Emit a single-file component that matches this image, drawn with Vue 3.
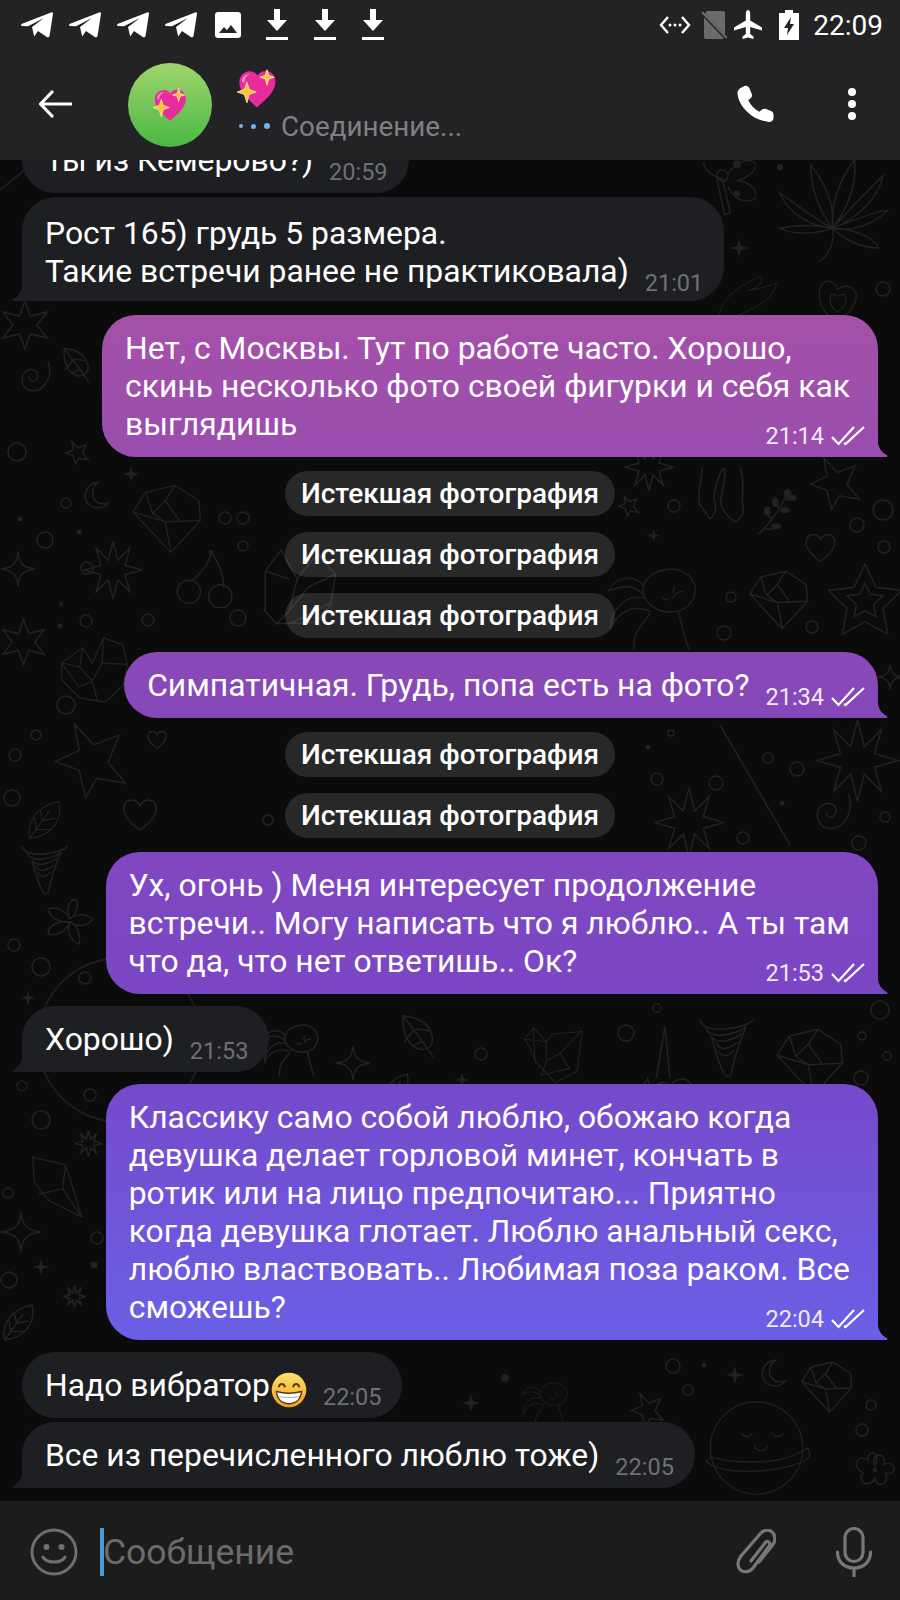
<template>
  <div class="screen">
    <svg class="defs" width="0" height="0">
      <defs>
        <symbol id="heart-emoji" viewBox="0 0 100 100">
          <path d="M50 94C28 74 8 58 8 34 8 18 20 8 33 8c8 0 14 4 18 10 4-7 11-11 19-11 14 0 24 11 24 26 0 24-22 41-44 61z" fill="#e92c9c" />
          <path d="M14 32C15 20 24 14 33 15c-8 3-13 10-13 20z" fill="#fa8dcc" />
          <path d="M26 34l5 17 17 6-17 6-5 20-6-20-17-6 17-6z" fill="#fbc531" stroke="#fff0a8" stroke-width="2" />
          <path d="M74 4l4 14 13 4-13 4-4 15-4-15-13-4 13-4z" fill="#fbc531" stroke="#fff0a8" stroke-width="2" />
        </symbol>
        <symbol id="star5" viewBox="0 0 100 100"><path d="M28 5l24 26 32-12-14 34 22 26-36-6-14 24-8-34L4 52l30-14z" /></symbol>
        <symbol id="star5b" viewBox="0 0 100 100"><path d="M50 5l14 30 33 4-24 23 6 33-29-16-29 16 6-33L3 39l33-4z" /><path d="M50 30l7 14 16 2-12 11 3 16-14-8-14 8 3-16-12-11 16-2z" /></symbol>
        <symbol id="star4" viewBox="0 0 100 100"><path d="M50 2c3 32 12 44 48 48-36 4-45 16-48 48-3-32-12-44-48-48 36-4 45-16 48-48z" /></symbol>
        <symbol id="star6" viewBox="0 0 100 100"><path d="M50 2l11 30 33-8-20 26 20 26-33-8-11 30-11-30-33 8 20-26L6 24l33 8z" /></symbol>
        <symbol id="burst" viewBox="0 0 100 100"><path d="M50 2l8 32 20-20-8 28 28 8-28 8 8 28-20-20-8 32-8-32-20 20 8-28-28-8 28-8-8-28 20 20z" /></symbol>
        <symbol id="spark" viewBox="0 0 100 100"><path d="M50 5l10 35 35 10-35 10-10 35-10-35L5 50l35-10z" fill="#222" stroke="none" /></symbol>
        <symbol id="diamond" viewBox="0 0 100 100"><path d="M3 40l18-28 42-10 34 22 2 28-42 46zM3 40l46 14 50-2M21 12l10 30 18 12 8 44M63 2l-14 22 20 28M31 42l18-18" /></symbol>
        <symbol id="heart" viewBox="0 0 100 100"><path d="M50 92C25 72 5 55 5 32 5 16 16 8 28 8c10 0 18 6 22 16 5-10 13-16 23-16 13 0 22 10 22 24 0 23-20 40-45 60z" /></symbol>
        <symbol id="heart2" viewBox="0 0 100 100"><path d="M48 96C20 86 4 60 8 28 10 12 22 4 34 8c8 3 12 8 14 20 8-8 20-12 32-6 12 7 14 20 8 34-8 20-22 32-40 40z" /><path d="M48 78c-10-8-18-18-16-34 2-8 10-10 16-2 6-6 18-8 20 2 2 14-8 26-20 34z" /></symbol>
        <symbol id="moon" viewBox="0 0 100 100"><path d="M58 4C28 6 8 26 8 54c0 24 20 42 44 42 16 0 30-6 38-18-30 10-56-4-56-34 0-18 8-32 24-40z" /></symbol>
        <symbol id="leaf" viewBox="0 0 100 100"><path d="M12 96C4 60 24 16 84 4c10 40-10 84-72 92zM12 96l50-70M28 74l-4-30M28 74l38 0M44 52l-6-28M44 52l32-6" /></symbol>
        <symbol id="leaf2" viewBox="0 0 100 100"><path d="M12 4c36 4 62 20 66 50 2 16-12 30-30 26C24 74 8 40 12 4zM12 4l46 62 22 32M34 38l-20 26M56 62L30 74M40 34l34 4" /></symbol>
        <symbol id="cherry" viewBox="0 0 100 100"><path d="M62 4C60 24 44 40 28 54M62 4c16 20 22 44 22 62" /><circle cx="24" cy="72" r="20" /><circle cx="78" cy="80" r="20" /><circle cx="62" cy="4" r="3" fill="#222" /></symbol>
        <symbol id="crystal" viewBox="0 0 100 100"><path d="M4 30l20-26 20 36-10 40-16 16-14-16zM4 30l30 10M44 40L70 8l22 26-6 36-52 26M70 8l-26 32M92 34L58 50 34 80M2 78l16 18 50-2 20-24" /></symbol>
        <symbol id="crystal2" viewBox="0 0 100 100"><path d="M5 4l60 14 30 96-60-30L8 50zM65 18L60 62 15 72M60 62l35 52" transform="scale(.88)" /></symbol>
        <symbol id="gem" viewBox="0 0 100 100"><path d="M5 40l30-22 14 22 16-36 28 10 6 28-6 30-26 24-36-6-26-26zM35 18l-4 28 18 20 14-26 2-36M31 46L5 40M49 66l8 30M63 40l36 2M49 66L30 74 5 40" /></symbol>
        <symbol id="gem2" viewBox="0 0 100 100"><path d="M4 30l14-18 20 22 10-12 46-4-8 62-34 18-30-32-10-24zM18 12l2 48M4 30l34 4 0 30 22-12 34-36M60 52l14 24-44 10M38 64l-8 22" /></symbol>
        <symbol id="flower" viewBox="0 0 100 100"><path d="M50 40c-16-30 30-40 22-4 30-14 36 30 4 22 14 30-26 40-26 10-10 30-50 14-30-12-30-10-16-50 12-30-2-26 34-28 18 14z" /><circle cx="50" cy="50" r="4" fill="#222" /></symbol>
        <symbol id="flower2" viewBox="0 0 100 100"><path d="M50 44C40 20 50 6 62 4c6 16 0 32-12 40 10-10 30-12 46 0-12 14-30 18-46 6 14 6 22 24 18 44-16-6-26-24-18-44-6 16-24 30-44 24 0-16 20-28 44-24C30 52 12 44 6 24c18-6 36 4 44 20z" /></symbol>
        <symbol id="spiral" viewBox="0 0 100 100"><path d="M88 6c16 40-8 88-46 90C14 96 2 72 8 50c6-18 28-26 40-16 12 10 8 30-6 32-8 1-14-6-12-14" /></symbol>
        <symbol id="weed" viewBox="0 0 100 100"><path d="M50 62C36 44 30 22 30 4c14 18 22 38 20 58zM50 62c-2-20 6-44 20-62 2 22-6 44-20 62zM50 62C66 44 80 30 96 14 92 34 72 54 50 62zM50 62C70 54 92 46 100 46 88 58 68 66 50 62zM50 62c14 0 36 6 42 18-16 0-32-8-42-18zM50 62C34 54 14 38 2 30c8 18 26 30 48 32zM50 62C30 58 12 60 2 62c12 6 32 6 48 0zM50 62c2 12-2 24-12 30" /></symbol>
        <symbol id="branch" viewBox="0 0 100 100"><path d="M8 100C40 70 60 40 72 8M40 66C24 60 28 40 28 40M24 88c12 4 28-2 30-10M58 40C46 40 42 24 42 24M66 22c8 0 18 0 24-6" /><ellipse cx="74" cy="8" rx="7" ry="9" fill="#222" /><ellipse cx="28" cy="48" rx="6" ry="9" fill="#222" /><ellipse cx="46" cy="28" rx="6" ry="9" fill="#222" /><ellipse cx="84" cy="18" rx="9" ry="5" fill="#222" /><ellipse cx="68" cy="46" rx="9" ry="5" fill="#222" /><ellipse cx="48" cy="82" rx="10" ry="5" fill="#222" /></symbol>
        <symbol id="shell" viewBox="0 0 100 100"><path d="M4 2c4 14 20 18 44 16 20-2 40-8 48-16M14 16c4 10 16 14 32 12 14-2 28-6 36-14M24 30c4 8 12 10 24 8 10-2 20-6 26-12M32 42c4 8 10 10 18 8 8-2 14-6 18-10M36 54c2 8 8 10 14 8 6-2 10-6 12-8M24 30c6 24 14 50 22 64 4 6 10 4 12-2 2-20 10-44 24-78" /></symbol>
        <symbol id="planet" viewBox="0 0 100 100"><circle cx="46" cy="50" r="42" /><path d="M4 58c30 8 70 6 88-8 4 4 4 10-8 14-30 10-70 10-84-2zM32 36c2 5 8 5 10 0M60 36c2 5 8 5 10 0M44 48c2 6 10 6 12 0" /></symbol>
        <symbol id="rabbit" viewBox="0 0 100 100"><path d="M40 30c8-20 40-24 52-8 10 14 2 32-16 36-22 4-40-12-36-28zM40 30C28 16 8 22 2 36c20-8 30-6 40 6M42 44C24 38 4 54 4 78c8-20 24-28 44-20M48 60C36 74 28 84 30 100M78 58c4 14 6 28 12 42M72 38l2-8M84 36c-4 0-10 2-12 8M60 42c2 4 4 4 8 2" /></symbol>
        <symbol id="socks" viewBox="0 0 100 100"><path d="M10 0C8 30 0 44 4 66l20 28c8-4 14-20 8-34-2-20 8-44 16-60M52 0c0 12-4 38-8 60-2 12 12 30 26 40 10-4 20-18 14-34C82 50 90 30 80 0" /></symbol>
        <symbol id="wing" viewBox="0 0 100 100"><path d="M0 100c10-50 50-60 72-74 6 10-4 22-20 24 14 0 36-8 46-12-2 24-34 46-88 62" /></symbol>
        <symbol id="butterfly" viewBox="0 0 100 100"><path d="M40 30C20 26 6 10 6 0M50 20C66 0 90-10 100 4c0 14-18 24-34 30 18 0 36 12 34 30-16 12-40 4-50-20M40 30l14 60-10 4-14-64z" /><circle cx="40" cy="24" r="10" /><circle cx="66" cy="4" r="6" fill="#222" /><circle cx="66" cy="56" r="4" fill="#222" /></symbol>
        <symbol id="unicorn" viewBox="0 0 100 100"><path d="M58 2l-10 60M58 2l6 60M14 96c-10-20 16-14 24-34 2 8 4 14 10 8 6-6 14-2 16 0 8-8 18-10 24-2 4 14-10 22-24 20-2 8 0 14-2 20M40 90l2 8" /></symbol>
      </defs>
    </svg>

    <header class="topbar">
      <div class="statusbar">
        <div class="status-left">
          <svg v-for="n in 4" :key="n" class="tg" viewBox="0 0 34 28"><path d="M1.500 13 31 1.500c1.200-.5 2.200.4 2 1.600L29.500 25c-.2 1.300-1.600 1.800-2.600 1L18 20l-3.800 5.500L12 16 24 7 8 15.200 2 15c-1-.1-1.300-1.500-.5-2z" fill="#fff" /></svg>
          <svg class="pic" viewBox="0 0 26 26"><path d="M3 0h20a3 3 0 0 1 3 3v20a3 3 0 0 1-3 3H3a3 3 0 0 1-3-3V3a3 3 0 0 1 3-3zm1 21h18l-6-8-4 5-3-3z" fill="#fff" fill-rule="evenodd" /></svg>
          <svg v-for="n in 3" :key="'d' + n" class="dl" viewBox="0 0 24 32"><path d="M9 0h6v11h7L12 22 2 11h7zM1 28h22v3H1z" fill="#fff" /></svg>
        </div>
        <div class="status-right">
          <svg class="vpn" viewBox="0 0 32 20"><path d="M9 2 2 10l7 8M23 2l7 8-7 8" fill="none" stroke="#fff" stroke-width="2.400" /><circle cx="11" cy="10" r="1.500" fill="#fff" /><circle cx="16" cy="10" r="1.500" fill="#fff" /><circle cx="21" cy="10" r="1.500" fill="#fff" /></svg>
          <svg class="sim" viewBox="0 0 25 28"><path d="M5 0h16a2 2 0 0 1 2 2v24a2 2 0 0 1-2 2H4a2 2 0 0 1-2-2V4z" fill="#6b6b6d" /><path d="M0 2l24 25" stroke="#232326" stroke-width="3.500" /><path d="M0 1l25 26" stroke="#6b6b6d" stroke-width="2" /></svg>
          <svg class="plane" viewBox="0 0 28 30"><path d="M14 0c1.400 0 2.200 2 2.200 4v6.500L28 17.500v3l-11.800-3.500v7l3.300 2.500V29L14 27.500 8.500 29v-2.500l3.300-2.500v-7L0 20.500v-3l11.800-7V4c0-2 .8-4 2.200-4z" fill="#fff" /></svg>
          <svg class="batt" viewBox="0 0 20 30"><path d="M6 0h8v3h6v27H0V3h6z" fill="#fff" /><path d="M12 7 5 18h4l-1 7 7-11h-4z" fill="#232326" /></svg>
          <span class="clock">22:09</span>
        </div>
      </div>
      <div class="actionbar">
        <svg class="back" viewBox="0 0 34 28"><path d="M14 2 2.500 14 14 26M3 14h30" fill="none" stroke="#fff" stroke-width="3.200" stroke-linecap="round" stroke-linejoin="round" /></svg>
        <div class="avatar"><svg class="avatar-emoji" viewBox="0 0 100 100"><use href="#heart-emoji" /></svg></div>
        <div class="peer">
          <svg class="peer-name" viewBox="0 0 100 100"><use href="#heart-emoji" /></svg>
          <div class="peer-status">
            <span class="typing"><i class="d1"></i><i class="d2"></i><i class="d3"></i></span>
            <span>Соединение...</span>
          </div>
        </div>
        <svg class="call" viewBox="0 0 38 38"><path d="M8.500 1c2-.8 4 .2 4.800 2l2.500 6c.6 1.500.2 3-1 4l-2.500 2.200c2 4.500 6 9 11 11.500l2.800-2.200c1.200-.9 2.600-1.100 4-.5l5 2c1.600.7 2.400 2.200 2.400 4v3c0 2.500-2 4-4.500 3.900C16 35.500 2.500 21 1.500 8.500 1.300 6.500 2.500 4 4.500 3z" fill="#fff" /></svg>
        <div class="more"><i></i><i></i><i></i></div>
      </div>
    </header>

    <main class="chat">
      <svg class="wallpaper" viewBox="0 0 900 1340" fill="none" stroke="#222">
        <use v-for="(d, i) in doodles" :key="i" :href="'#' + d[0]" :x="d[1]" :y="d[2] - 160" :width="d[3]" :height="d[4] || d[3]" :stroke-width="(1.5 * 100) / d[3]" />
        <circle v-for="(c, i) in rings" :key="'c' + i" :cx="c[0]" :cy="c[1] - 160" :r="c[2]" stroke-width="1.500" />
        <circle v-for="(c, i) in dots" :key="'p' + i" :cx="c[0]" :cy="c[1] - 160" :r="c[2]" fill="#222" stroke="none" />
        <path d="M720 565 790 685 M0 30 62 -20" stroke-width="1.500" />
        <circle cx="120" cy="880" r="82" stroke-width="1.500" />
      </svg>

      <template v-for="(m, i) in messages" :key="i">
        <div v-if="m.kind === 'expired'" class="row center" :class="m.cls"><span class="pill">Истекшая фотография</span></div>
        <div v-else class="row" :class="[m.kind, m.cls]">
          <div class="bubble" :class="[m.kind, m.inner, { tail: m.tail, wide: m.wide }]">
            <div class="text">
              <template v-for="(line, j) in m.lines" :key="j">{{ line }}<br v-if="j < m.lines.length - 1" /></template>
              <svg v-if="m.grin" class="grin" viewBox="0 0 100 100">
                <defs><linearGradient id="grin-fill" x1="0" y1="0" x2="0" y2="1"><stop offset="0" stop-color="#fde26a" /><stop offset="1" stop-color="#f59d1e" /></linearGradient></defs>
                <circle cx="50" cy="50" r="48" fill="url(#grin-fill)" />
                <path d="M22 40c3-9 13-9 16 0M62 40c3-9 13-9 16 0" fill="none" stroke="#5b3a12" stroke-width="6" stroke-linecap="round" />
                <path d="M15 54c22 6 48 6 70 0-2 22-16 34-35 34S17 76 15 54z" fill="#fff" stroke="#5b3a12" stroke-width="4" />
                <path d="M20 68c18 4 42 4 60 0" fill="none" stroke="#8c8c8c" stroke-width="2" />
              </svg>
            </div>
            <div class="meta">
              <span class="time">{{ m.time }}</span>
              <svg v-if="m.kind === 'out'" class="checks" viewBox="0 0 34 20"><path d="M1 11l6.500 7L23 1M13 17l1.500 1L33 1" fill="none" stroke="#fff" stroke-width="2.200" /></svg>
            </div>
          </div>
        </div>
      </template>
    </main>

    <footer class="composer">
      <svg class="smile" viewBox="0 0 48 48"><circle cx="24" cy="24" r="22" fill="none" stroke="#6f6f6f" stroke-width="3" /><circle cx="16.500" cy="19" r="3" fill="#6f6f6f" /><circle cx="31.500" cy="19" r="3" fill="#6f6f6f" /><path d="M13 29c3 6.500 19 6.500 22 0" fill="none" stroke="#6f6f6f" stroke-width="3" stroke-linecap="round" /></svg>
      <div class="input"><i class="caret"></i><span>Сообщение</span></div>
      <svg class="clip" viewBox="0 0 40 46"><path d="M15 33 29 15c2-3 6-1 4.500 2.500L17 40c-4 5-11 5-14 0-2-4-1-8 2-12L24 6c4-5 10-5 13-1 3 4 2 9-1 13L23 34" transform="translate(0 -1)" fill="none" stroke="#777" stroke-width="3.200" stroke-linecap="round" /></svg>
      <svg class="mic" viewBox="0 0 36 50"><rect x="9" y="1.500" width="18" height="33" rx="9" fill="none" stroke="#777" stroke-width="3.200" /><path d="M1.500 25c0 10 7 16 16.500 16s16.500-6 16.500-16M18 41v8" fill="none" stroke="#777" stroke-width="3.200" stroke-linecap="round" /></svg>
    </footer>
  </div>
</template>

<script setup>
const messages = [
  { kind: 'in', lines: ['Ты из Кемерово?)'], time: '20:59', cls: 'gap-s' },
  { kind: 'in', inner: 'low', lines: ['Рост 165) грудь 5 размера.', 'Такие встречи ранее не практиковала)'], time: '21:01', tail: true, cls: 'gap-s' },
  { kind: 'out', lines: ['Нет, с Москвы. Тут по работе часто. Хорошо,', 'скинь несколько фото своей фигурки и себя как', 'выглядишь'], time: '21:14', tail: true, wide: true, cls: 'gap-m' },
  { kind: 'expired', cls: 'gap-m' },
  { kind: 'expired', cls: 'gap-p' },
  { kind: 'expired', cls: 'gap-p' },
  { kind: 'out', lines: ['Симпатичная. Грудь, попа есть на фото?'], time: '21:34', tail: true, cls: 'gap-m' },
  { kind: 'expired', cls: 'gap-m' },
  { kind: 'expired', cls: 'gap-p' },
  { kind: 'out', lines: ['Ух, огонь ) Меня интересует продолжение', 'встречи.. Могу написать что я люблю.. А ты там', 'что да, что нет ответишь.. Ок?'], time: '21:53', tail: true, wide: true, cls: 'gap-m' },
  { kind: 'in', lines: ['Хорошо)'], time: '21:53', tail: true, cls: 'gap-l' },
  { kind: 'out', lines: ['Классику само собой люблю, обожаю когда', 'девушка делает горловой минет, кончать в', 'ротик или на лицо предпочитаю... Приятно', 'когда девушка глотает. Люблю анальный секс,', 'люблю властвовать.. Любимая поза раком. Все', 'сможешь?'], time: '22:04', tail: true, wide: true, cls: 'gap-l' },
  { kind: 'in', lines: ['Надо вибратор'], grin: true, time: '22:05', cls: 'gap-l' },
  { kind: 'in', lines: ['Все из перечисленного люблю тоже)'], time: '22:05', tail: true, cls: 'gap-s' }
]

// name, x, y, width, height (page coordinates)
const doodles = [
  ['weed', 775, 160, 115, 110], ['heart2', 812, 278, 52, 44], ['butterfly', 700, 160, 56, 60], ['wing', 700, 260, 95, 60], ['spark', 729, 238, 20],
  ['star6', 0, 300, 50], ['spiral', 20, 360, 32], ['leaf2', 60, 345, 36, 40],
  ['burst', 624, 442, 50], ['socks', 697, 450, 54, 90], ['branch', 755, 468, 44, 88], ['star5', 806, 455, 60, 56], ['heart', 803, 532, 35, 32], ['diamond', 747, 570, 62, 60], ['star5b', 826, 558, 78, 82], ['rabbit', 600, 558, 105, 92],
  ['star5', 618, 495, 22], ['spark', 646, 528, 15],
  ['diamond', 127, 484, 78, 70], ['moon', 83, 480, 28, 30], ['burst', 83, 540, 60], ['star4', 0, 543, 36, 52], ['cherry', 175, 550, 58], ['crystal', 262, 522, 80, 130], ['star6', 0, 613, 47, 58], ['gem', 52, 635, 82, 70], ['star5', 50, 720, 84, 80], ['heart', 122, 795, 36, 40], ['heart', 147, 730, 20, 20], ['leaf', 20, 800, 50, 40],
  ['spark', 122, 465, 18], ['star5', 65, 440, 25],
  ['burst', 815, 718, 85, 85], ['burst', 653, 775, 72, 95], ['star4', 877, 658, 26, 38], ['spiral', 815, 790, 38, 42],
  ['shell', 20, 840, 50, 60], ['flower2', 45, 897, 50], ['crystal2', 30, 1155, 62], ['star4', 0, 1205, 42, 54], ['spark', 20, 990, 16], ['spark', 32, 1258, 18], ['burst', 75, 1130, 27], ['burst', 63, 1285, 23], ['leaf', 0, 1300, 38, 45],
  ['star4', 335, 1033, 36, 60], ['leaf2', 398, 1002, 44, 68], ['leaf', 382, 1065, 30, 46], ['gem2', 510, 1020, 88, 64], ['shell', 697, 1000, 60, 96], ['diamond', 775, 1012, 68, 100], ['unicorn', 615, 1025, 86, 86], ['rabbit', 262, 1005, 58, 84], ['spark', 454, 1072, 16], ['spark', 515, 1082, 16],
  ['planet', 695, 1393, 132, 110], ['diamond', 800, 1352, 52, 70], ['moon', 760, 1358, 28, 30], ['spark', 725, 1365, 20], ['flower', 855, 1450, 40], ['star5', 630, 1392, 36], ['rabbit', 500, 1377, 90, 48], ['spark', 461, 1393, 20]
]

const rings = [
  [17, 452, 9], [45, 540, 8], [66, 503, 5], [243, 518, 6], [66, 705, 9], [36, 735, 5], [15, 755, 6], [12, 798, 8], [268, 820, 5], [225, 518, 6], [238, 618, 8], [148, 620, 6], [87, 568, 6], [243, 546, 5], [86, 621, 6],
  [674, 506, 6], [883, 510, 10], [857, 525, 7], [884, 547, 6], [731, 597, 5], [812, 627, 6], [724, 633, 7], [671, 733, 3], [768, 758, 5], [797, 769, 7], [657, 779, 6], [716, 783, 7], [885, 817, 5], [743, 838, 6], [859, 843, 7],
  [14, 945, 6], [41, 967, 9], [85, 978, 6], [22, 1086, 5], [41, 1120, 9], [90, 1095, 6], [8, 1193, 5], [97, 1238, 6], [9, 1280, 8],
  [481, 1054, 6], [626, 1033, 8], [657, 1008, 4], [569, 1098, 6], [880, 1010, 9], [862, 1036, 4], [887, 1056, 4], [861, 1078, 7],
  [883, 289, 7], [673, 1366, 7], [688, 1390, 5], [871, 1405, 5], [862, 1430, 6]
]

const dots = [
  [20, 519, 2.5], [79, 532, 2.5], [61, 604, 2], [60, 626, 2.5], [648, 747, 2.5], [782, 803, 2.5], [94, 1265, 3.5], [780, 167, 3], [704, 1365, 2.5], [505, 1378, 4]
]
</script>

<style scoped>
.screen {
  width: 900px;
  height: 1600px;
  display: flex;
  flex-direction: column;
  overflow: hidden;
  background: #0b0b0b;
  color: #fff;
  font-family: Roboto, "Liberation Sans", sans-serif;
}

.defs { position: absolute; }

/* top */
.topbar {
  flex: none;
  height: 160px;
  background: #232326;
  position: relative;
  z-index: 2;
  display: flex;
  flex-direction: column;
}

.statusbar {
  height: 50px;
  padding: 0 17px 0 20px;
  display: flex;
  align-items: center;
  justify-content: space-between;
}

.status-left, .status-right { display: flex; align-items: center; }
.status-left { gap: 14px; }
.tg { width: 34px; height: 28px; }
.pic { width: 26px; height: 26px; margin-left: 3px; }
.dl { width: 24px; height: 32px; margin: 0 0 0 10px; }
.dl + .dl { margin-left: 10px; }
.vpn { width: 32px; height: 20px; }
.sim { width: 25px; height: 28px; margin-left: 11px; }
.plane { width: 28px; height: 30px; margin-left: 7px; }
.batt { width: 20px; height: 30px; margin-left: 17px; }
.clock { font-size: 28px; margin-left: 14px; }

.actionbar {
  flex: 1;
  display: flex;
  align-items: center;
  padding: 0 0 0 38px;
}

.back { width: 34px; height: 28px; margin-top: -2px; }

.avatar {
  width: 84px;
  height: 84px;
  border-radius: 50%;
  margin-left: 56px;
  background: linear-gradient(180deg, #9fd56b, #4bb845);
  display: flex;
  align-items: center;
  justify-content: center;
}

.avatar-emoji { width: 36px; height: 36px; }

.peer { margin-left: 24px; display: flex; flex-direction: column; flex: 1; }
.peer-name { width: 42px; height: 42px; margin-left: 0; }
.peer-status { display: flex; align-items: center; color: #808083; font-size: 27.800px; height: 32px; }
.typing { display: flex; align-items: center; gap: 8px; width: 42px; margin-left: 3px; }
.typing i { display: block; border-radius: 50%; background: #6cb6f5; }
.d1 { width: 4px; height: 4px; }
.d2 { width: 5px; height: 5px; }
.d3 { width: 6px; height: 6px; }

.call { width: 38px; height: 38px; margin-right: 74px; margin-top: -2px; }
.more { display: flex; flex-direction: column; gap: 4px; margin-right: 44px; margin-top: -2px; }
.more i { display: block; width: 8px; height: 8px; border-radius: 50%; background: #fff; }

/* messages */
.chat {
  flex: 1;
  min-height: 0;
  position: relative;
  overflow: hidden;
  display: flex;
  flex-direction: column;
  justify-content: flex-end;
  padding-bottom: 13px;
  background: #0b0b0b;
}

.wallpaper {
  position: absolute;
  left: 0;
  top: 0;
  width: 900px;
  height: 1340px;
}

.row { flex: none; display: flex; position: relative; }
.row.in { justify-content: flex-start; padding-left: 22px; }
.row.out { justify-content: flex-end; padding-right: 22px; }
.row.center { justify-content: center; }
.gap-s { margin-top: 4px; }
.gap-m { margin-top: 14px; }
.gap-l { margin-top: 12px; }
.gap-p { margin-top: 16px; }

.pill {
  height: 45px;
  padding: 0 16px;
  display: flex;
  align-items: center;
  border-radius: 23px;
  background: rgba(255, 255, 255, 0.12);
  font-size: 28px;
  font-weight: 500;
}

.bubble {
  position: relative;
  display: flex;
  align-items: flex-end;
  gap: 16px;
  padding: 14px 21px 14px 23px;
  border-radius: 34px;
  font-size: 31.850px;
  line-height: 38px;
}

.bubble.low { padding-top: 17px; padding-bottom: 11px; }
.bubble.in { background: #1e1f22; }

.bubble.out {
  background: linear-gradient(180deg, #a651a8 300px, #8848b8 680px, #7846c8 1050px, #6a60e6 1340px) fixed;
  padding-right: 13px;
}

.bubble.wide { padding-right: 28px; display: block; }
.bubble.wide .meta { position: absolute; right: 13px; bottom: 4px; margin-bottom: 0; }

.bubble.in.tail { border-bottom-left-radius: 0; }
.bubble.out.tail { border-bottom-right-radius: 0; }

.bubble.in.tail::after, .bubble.out.tail::after {
  content: "";
  position: absolute;
  bottom: 0;
  width: 11px;
  height: 24px;
  background: inherit;
}

.bubble.out.tail::after {
  right: -10px;
  clip-path: path("M0 0C0 12 3 19 10 22Q11 24 9 24L0 24Z");
}

.bubble.in.tail::after {
  left: -10px;
  clip-path: path("M11 0C11 12 8 19 1 22Q0 24 2 24L11 24Z");
}

.text { white-space: nowrap; height: 100%; }
.grin { width: 36px; height: 36px; vertical-align: -6px; margin: -6px 0 -6px 1px; }

.meta { display: flex; align-items: center; gap: 7px; flex: none; height: 34px; margin-bottom: -10px; }
.time { font-size: 23.500px; line-height: 34px; }
.in .time { color: #6f7073; }
.out .time { color: #f1e8f7; }
.checks { width: 34px; height: 20px; }

/* bottom */
.composer {
  flex: none;
  height: 99px;
  background: #1c1c1d;
  position: relative;
  display: flex;
  align-items: center;
  padding: 0 28px 0 30px;
}

.smile { width: 48px; height: 48px; margin-top: 3px; }
.input { flex: 1; display: flex; align-items: center; margin-left: 22px; color: #6b6b6b; font-size: 35.500px; margin-top: 3px; }
.caret { display: block; width: 4px; height: 48px; background: #4a9ad4; margin-right: -1px; }
.clip { width: 40px; height: 46px; margin-right: 60px; margin-top: 3px; }
.mic { width: 36px; height: 50px; margin-top: 3px; }
</style>

<style>
body { background: #0b0b0b; }
</style>
